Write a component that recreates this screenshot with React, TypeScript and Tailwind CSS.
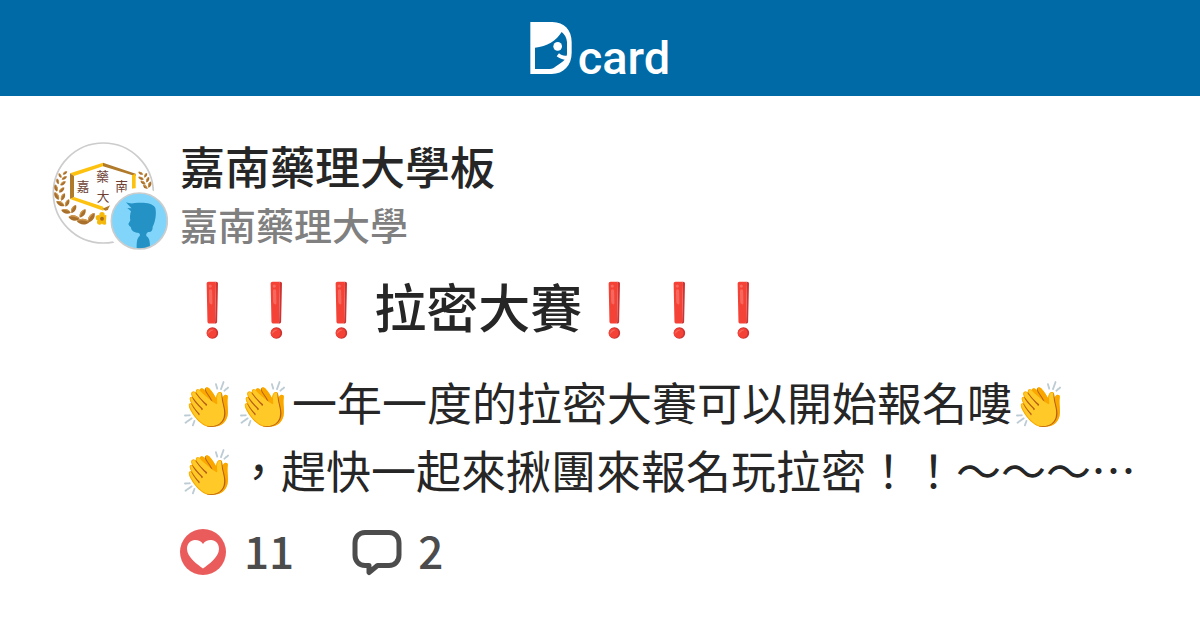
function LogoMark() {
  return (
    <svg viewBox="34 36 124 156" className="h-[52px] w-[42px]" aria-hidden="true">
      <path
        fill="#fff"
        fillRule="evenodd"
        d="M34 36H100C136 37 158 60 158 96V128C158 166 134 191 98 192H34ZM48 113V177H92C100 177 106 174 111 169C122 160 132 156 137 149C129 148 120 145 113 139L120 130C126 136 134 138 143 137L144 132V96C143 83 137 73 128 66C112 92 84 110 48 113Z"
      />
      <circle cx="116" cy="109" r="13" fill="#fff" />
    </svg>
  );
}

const leftLeaves = [
  [75, 129, -35, 8], [60, 137, 60, 8], [73, 144, -30, 9], [53, 154, 75, 9], [69, 160, -35, 10],
  [48, 174, 75, 11], [65, 180, -45, 11], [50, 198, 60, 13], [69, 201, -65, 12],
  [61, 221, 30, 14], [82, 219, -65, 12], [78, 244, 15, 15], [101, 237, -60, 14],
  [102, 264, 10, 17], [128, 250, -55, 15], [129, 275, 5, 19], [154, 263, -55, 17],
];

const rightLeaves = [
  [302, 130, 30, 8], [317, 136, -60, 8], [303, 145, 25, 9], [323, 149, -65, 9],
  [309, 158, 35, 9], [329, 164, -70, 10], [316, 171, 45, 9],
];

function Leaves({ items }: { items: number[][] }) {
  return (
    <>
      {items.map(([x, y, r, s], i) => (
        <g key={i} transform={`translate(${x} ${y}) rotate(${r}) scale(${s})`}>
          <path fill="#a9702c" d="M-1 0C-.5 -.6 .5 -.6 1 0C.5 .6 -.5 .6 -1 0Z" />
          <path fill="#d39c50" d="M-1 0C-.5 -.6 .5 -.6 1 0C.4 -.3 -.4 -.3 -1 0Z" />
        </g>
      ))}
    </>
  );
}

function Avatar() {
  return (
    <svg viewBox="36 36 348 327" className="h-[109px] w-[116px] shrink-0" role="img" aria-label="嘉南藥理大學">
      <circle cx="190" cy="189" r="150" fill="#fff" stroke="#ccc" strokeWidth="5" />
      <Leaves items={leftLeaves} />
      <Leaves items={rightLeaves} />
      <path fill="#fdc20f" d="M90 130L189 98V109L102 138Z" />
      <path fill="#b07a2b" d="M189 98L287 131V139L189 109Z" />
      <path fill="#b07a2b" d="M90 130L102 138V202L90 207Z" />
      <path fill="#fdc20f" d="M276 136L287 131V190H276Z" />
      <path fill="#fdc20f" d="M90 207L102 201L190 230V242Z" />
      <path fill="#b07a2b" d="M187 236L225 220V234L196 242Z" />
      <g fill="#6d3f35" fontSize="38" className="font-['Noto_Sans_CJK_TC',sans-serif] font-normal" textAnchor="middle">
        <text x="188" y="153">藥</text>
        <text x="129" y="183">嘉</text>
        <text x="245" y="183">南</text>
        <text x="189" y="213">大</text>
      </g>
      <g fill="#f5b80c">
        <circle cx="186" cy="254" r="8" />
        <circle cx="197" cy="263" r="8" />
        <circle cx="193" cy="276" r="8" />
        <circle cx="179" cy="276" r="8" />
        <circle cx="175" cy="263" r="8" />
      </g>
      <circle cx="186" cy="266" r="6" fill="#a96b14" />
      <circle cx="298" cy="273" r="100" fill="#fff" />
      <circle cx="298" cy="273" r="84" fill="#81d4fa" />
      <path
        fill="#2492c4"
        d="M258 216C268 221 275 221 285 219C310 217 338 218 346 234C350 250 346 275 338 290C338 302 334 307 325 306C319 309 318 312 319 318C327 323 330 332 330 350C316 356 302 357 290 356C290 338 290 326 299 318C302 312 298 308 291 308C282 307 273 302 273 292C269 289 266 285 265 282L271 271C269 262 270 253 273 244L262 234L275 235C269 228 263 224 258 216Z"
      />
      <circle cx="298" cy="273" r="84" fill="none" stroke="#ccc" strokeWidth="5" />
    </svg>
  );
}

function HeartIcon() {
  return (
    <svg viewBox="0 0 46 46" className="size-[46px]" aria-hidden="true">
      <circle cx="23" cy="23" r="23" fill="#ea5c5c" />
      <path fill="#fff" d="M23 39.5C18 36 7 28 7 20C7 14.500 10.500 11 15 11C18.500 11 21.500 12.500 23 15C24.500 12.500 27.500 11 31 11C35.500 11 39 14.500 39 20C39 28 28 36 23 39.500Z" />
    </svg>
  );
}

function CommentIcon() {
  return (
    <svg viewBox="0 0 50 47" className="h-[47px] w-[50px]" aria-hidden="true">
      <path
        fill="none"
        stroke="#4c4c4c"
        strokeWidth="5"
        strokeLinejoin="round"
        d="M13 3.500H37C43 3.500 47 8 47 14V26C47 32 43 36.500 37 36.500H25.500L17 43.500V36.500H13C7 36.500 3 32 3 26V14C3 8 7 3.500 13 3.500Z"
      />
    </svg>
  );
}

export default function App() {
  return (
    <div className="min-h-screen bg-white font-['Noto_Sans_CJK_TC','Noto_Color_Emoji',sans-serif] text-[#262626]">
      <header className="flex h-24 items-center justify-center gap-1.5 bg-[#006aa6]">
        <LogoMark />
        <span className="pt-5 font-['Roboto',sans-serif] text-[47px] leading-[52px] font-medium text-white">card</span>
      </header>
      <main className="px-[52px] pt-[46px]">
        <div className="flex gap-3">
          <Avatar />
          <div>
            <div className="text-[45px] leading-[48px] font-medium">嘉南藥理大學板</div>
            <div className="mt-1.5 text-[38px] leading-[56px] font-medium text-[#808080]">嘉南藥理大學</div>
          </div>
        </div>
        <article className="pl-32">
          <h1 className="mt-5 text-[52px] leading-[68px] font-medium">❗❗❗拉密大賽❗❗❗</h1>
          <p className="mt-7 text-[45px] leading-[68px] whitespace-nowrap">
            👏👏一年一度的拉密大賽可以開始報名嘍👏
            <br />
            👏，趕快一起來揪團來報名玩拉密！！～～～…
          </p>
          <div className="mt-6 flex items-center text-[44px] leading-[44px] font-medium text-[#4c4c4c]">
            <HeartIcon />
            <span className="ml-[18px] pb-1">11</span>
            <span className="ml-[58px]">
              <CommentIcon />
            </span>
            <span className="ml-4 pb-1">2</span>
          </div>
        </article>
      </main>
    </div>
  );
}
